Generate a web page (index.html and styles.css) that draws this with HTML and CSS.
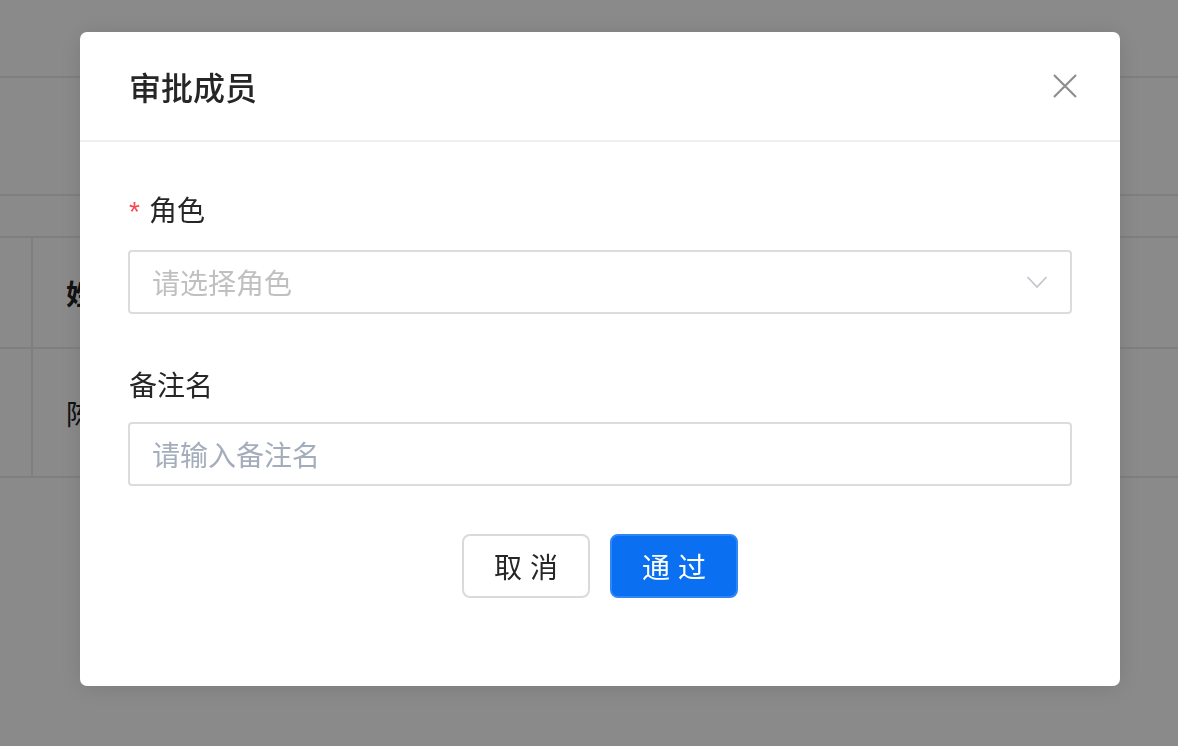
FILE: index.html
```html
<!DOCTYPE html>
<html lang="zh-CN">
<head>
  <meta charset="UTF-8" />
  <meta name="viewport" content="width=device-width, initial-scale=1.0"/>
  <title>审批成员</title>
  <link rel="stylesheet" href="styles.css">
</head>
<body>
  <!-- page behind the dialog -->
  <div class="page">
    <div class="top-bar"></div>
    <div class="filter-bar"></div>
    <div class="spacer"></div>
    <div class="table">
      <div class="row head">
        <div class="cell check"></div>
        <div class="cell">姓名</div>
      </div>
      <div class="row">
        <div class="cell check"></div>
        <div class="cell">陈明</div>
      </div>
    </div>
  </div>

  <!-- dialog -->
  <div class="mask">
    <div class="dialog">
      <div class="dialog-header">
        <span class="dialog-title">审批成员</span>
        <button class="close-btn" aria-label="关闭">
          <svg width="26" height="26" viewBox="0 0 26 26">
            <path d="M2 2 L24 24 M24 2 L2 24" stroke="#8e8e8e" stroke-width="2.2" fill="none"/>
          </svg>
        </button>
      </div>

      <div class="dialog-body">
        <div class="form-item">
          <label class="form-label"><span class="required">*</span>角色</label>
          <div class="select">
            <span class="placeholder">请选择角色</span>
            <svg class="arrow" width="22" height="14" viewBox="0 0 22 14">
              <path d="M1.5 2 L11 12 L20.5 2" stroke="#c4c6cc" stroke-width="1.8" fill="none"/>
            </svg>
          </div>
        </div>

        <div class="form-item">
          <label class="form-label">备注名</label>
          <input class="text-input" type="text" placeholder="请输入备注名" />
        </div>

        <div class="dialog-footer">
          <button class="btn">取消</button>
          <button class="btn primary">通过</button>
        </div>
      </div>
    </div>
  </div>
</body>
</html>
```

FILE: styles.css
```css
body {
  margin: 0;
  font-family: "Noto Sans CJK SC", "Noto Sans", sans-serif;
  background: #fff;
  color: #303133;
  height: 746px;
  overflow: hidden;
}

/* background page */
.page {
  background: #fff;
}

.top-bar {
  height: 76px;
  border-bottom: 2px solid #ebebeb;
}

.filter-bar {
  height: 116px;
  border-bottom: 2px solid #ebebeb;
}

.spacer {
  height: 40px;
  border-bottom: 2px solid #ebebeb;
}

.row {
  display: flex;
  height: 109px;
  border-bottom: 2px solid #ebebeb;
}

.row + .row {
  height: 127px;
}

.cell {
  display: flex;
  align-items: center;
  padding-left: 33px;
  font-size: 28px;
  color: #222;
}

.row.head .cell {
  font-weight: 700;
}

.cell.check {
  width: 31px;
  padding: 0;
  border-right: 2px solid #ebebeb;
}

/* dialog */
.mask {
  position: fixed;
  inset: 0;
  background: rgba(0, 0, 0, 0.46);
  display: flex;
  align-items: flex-start;
}

.dialog {
  margin: 32px 0 0 80px;
  width: 1040px;
  height: 654px;
  background: #fff;
  border-radius: 7px;
  box-shadow: 0 2px 24px rgba(0, 0, 0, 0.12);
}

.dialog-header {
  height: 108px;
  border-bottom: 2px solid #f0f0f0;
  display: flex;
  align-items: center;
  justify-content: space-between;
  padding: 0 42px 0 49px;
}

.dialog-title {
  font-size: 32px;
  font-weight: 500;
  color: #262626;
}

.close-btn {
  background: none;
  border: none;
  padding: 0;
  width: 26px;
  height: 26px;
  cursor: pointer;
  display: flex;
}

.dialog-body {
  padding: 47px 48px 0;
}

.form-item {
  margin-bottom: 50px;
}

.form-label {
  display: block;
  font-size: 28px;
  line-height: 40px;
  color: #262626;
  padding-left: 1px;
  margin-bottom: 18px;
}

.required {
  font-family: "Liberation Sans", sans-serif;
  color: #f5484f;
  margin-right: 9px;
}

.select,
.text-input {
  box-sizing: border-box;
  width: 100%;
  height: 64px;
  border: 2px solid #dcdcdc;
  border-radius: 4px;
  padding: 0 22px;
  font-family: inherit;
  font-size: 28px;
}

.select {
  display: flex;
  align-items: center;
  justify-content: space-between;
}

.select .placeholder {
  color: #c0c0c0;
}

.text-input {
  display: block;
  outline: none;
  color: #333;
}

.text-input::placeholder {
  color: #a4adbb;
}

.dialog-footer {
  display: flex;
  justify-content: center;
  gap: 20px;
  margin-top: -2px;
}

.btn {
  box-sizing: border-box;
  width: 128px;
  height: 64px;
  border: 2px solid #dadada;
  border-radius: 8px;
  background: #fff;
  color: #262626;
  font-family: inherit;
  font-size: 28px;
  letter-spacing: 8px;
  padding: 0 0 0 8px;
  cursor: pointer;
}

.btn.primary {
  background: #0a6ff1;
  border-color: #2f87f6;
  color: #fff;
}
```
